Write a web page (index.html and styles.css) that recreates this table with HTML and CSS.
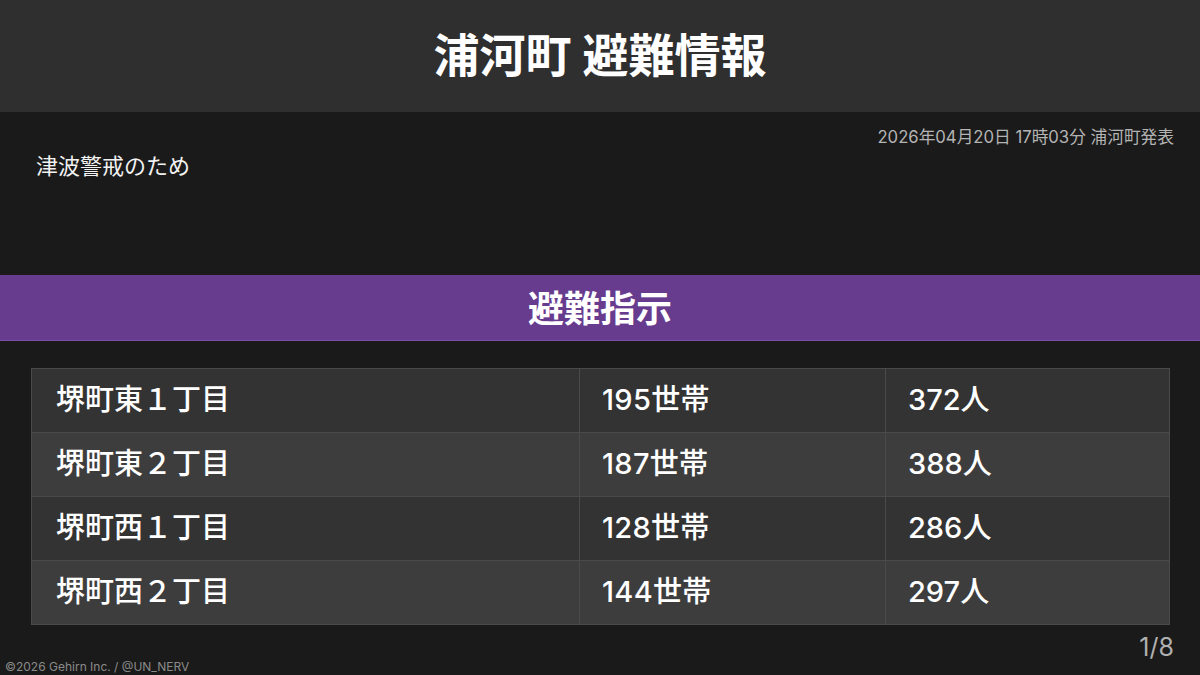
FILE: index.html
```html
<!DOCTYPE html>
<html lang="ja">
<head>
<meta charset="utf-8">
<title>浦河町 避難情報</title>
<link rel="stylesheet" href="styles.css">
</head>
<body>
<div class="screen">
  <header class="header"><h1 class="title">浦河町 避難情報</h1></header>
  <section class="info">
    <div class="issued">2026年04月20日 17時03分 浦河町発表</div>
    <div class="reason">津波警戒のため</div>
  </section>
  <div class="band">避難指示</div>
  <table class="areas">
    <tr class="row"><td class="c1">堺町東１丁目</td><td class="c2">195世帯</td><td class="c3">372人</td></tr>
    <tr class="row alt"><td class="c1">堺町東２丁目</td><td class="c2">187世帯</td><td class="c3">388人</td></tr>
    <tr class="row"><td class="c1">堺町西１丁目</td><td class="c2">128世帯</td><td class="c3">286人</td></tr>
    <tr class="row alt"><td class="c1">堺町西２丁目</td><td class="c2">144世帯</td><td class="c3">297人</td></tr>
  </table>
  <footer class="footer">
    <div class="page">1/8</div>
    <div class="copy">©2026 Gehirn Inc. / @UN_NERV</div>
  </footer>
</div>
</body>
</html>
```
FILE: styles.css
```css
html, body {
  margin: 0;
  padding: 0;
  background: #1a1a1a;
}
.screen {
  width: 1200px;
  height: 675px;
  overflow: hidden;
  display: flex;
  flex-direction: column;
  background: #1a1a1a;
  color: #fff;
  font-family: Inter, "Noto Sans CJK JP", sans-serif;
}
.header {
  height: 112px;
  background: #2f2f2f;
  display: flex;
  align-items: center;
  justify-content: center;
}
.title {
  margin: 0;
  font-size: 46px;
  font-weight: 700;
  line-height: 1;
  padding-bottom: 2px;
}
.info {
  height: 163px;
  box-sizing: border-box;
  padding: 15px 26px 0 36px;
}
.issued {
  text-align: right;
  font-size: 16.7px;
  line-height: 20px;
  color: #b4b4b4;
}
.reason {
  margin-top: 5px;
  font-size: 22px;
  line-height: 28px;
  color: #f2f2f2;
}
.band {
  height: 66px;
  box-sizing: border-box;
  background: #673c8e;
  border-bottom: 1px solid #7a4ea2;
  display: flex;
  align-items: center;
  justify-content: center;
  font-size: 36px;
  font-weight: 700;
  padding-bottom: 4px;
}
.areas {
  margin: 27px 0 0 31px;
  width: 1138px;
  border-collapse: collapse;
  table-layout: fixed;
}
.row td {
  height: 64px;
  box-sizing: border-box;
  border: 1px solid #4a4a4a;
  font-size: 29px;
  font-weight: 500;
  padding: 0 0 2px 22px;
  line-height: 1;
  color: #fff;
  background: #333333;
}
.row.alt td {
  background: #3d3d3d;
}
.c1 { width: 548px; padding-left: 24px !important; }
.c2 { width: 306px; letter-spacing: 0.3px; }
.c3 { width: 284px; }
.footer {
  flex: 1;
  position: relative;
}
.page {
  text-align: right;
  padding: 7px 26px 0 0;
  font-size: 25px;
  line-height: 30px;
  color: #b0b0b0;
}
.copy {
  position: absolute;
  left: 5px;
  bottom: 0;
  font-size: 12px;
  line-height: 16px;
  color: #8a8a8a;
}
```
